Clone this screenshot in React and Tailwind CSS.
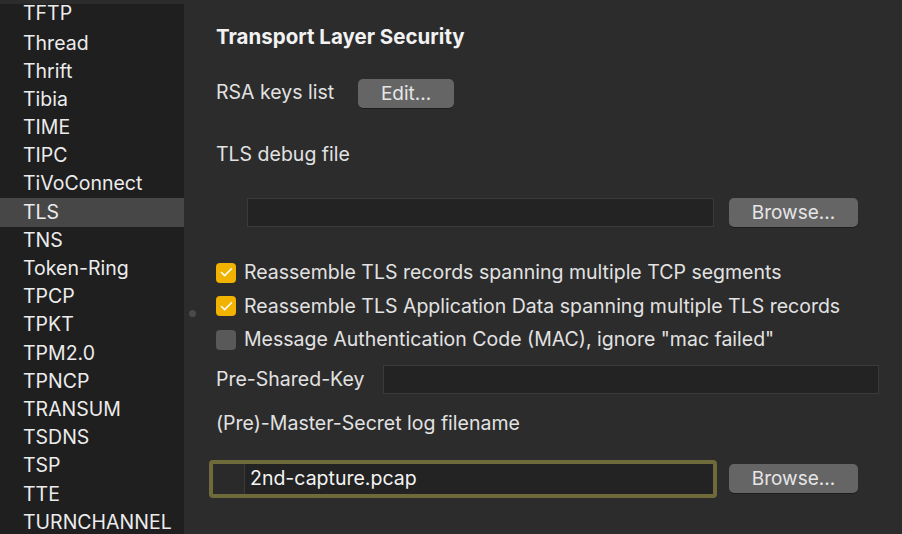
import { Check } from 'lucide-react';

const PROTOCOLS = [
  'TFTP', 'Thread', 'Thrift', 'Tibia', 'TIME', 'TIPC', 'TiVoConnect', 'TLS', 'TNS', 'Token-Ring',
  'TPCP', 'TPKT', 'TPM2.0', 'TPNCP', 'TRANSUM', 'TSDNS', 'TSP', 'TTE', 'TURNCHANNEL',
];

const MacButton = ({ children, className = '' }) => (
  <button className={`h-[29px] rounded-[5px] bg-[#656565] text-[#e6e6e6] text-[19px] leading-none flex items-center justify-center shadow-[0_1px_0_rgba(0,0,0,0.35)] ${className}`}>
    {children}
  </button>
);

const CheckRow = ({ checked, label }) => (
  <div className="flex items-center h-[33.5px]">
    <span className={`w-[20px] h-[20px] rounded-[4px] flex items-center justify-center ${checked ? 'bg-[#f2b300]' : 'bg-[#595959]'}`}>
      {checked && <Check size={15} strokeWidth={2.5} className="text-white" />}
    </span>
    <span className="ml-[8px]">{label}</span>
  </div>
);

export default function App() {
  return (
    <div className="w-[902px] h-[534px] overflow-hidden bg-[#2c2c2c] text-[#e2e2e2] text-[19.5px] flex" style={{ fontFamily: 'Inter, "Liberation Sans", sans-serif' }}>
      {/* protocol list */}
      <div className="w-[184px] h-full pt-[4px] shrink-0 flex flex-col">
        <div className="flex-1 bg-[#1f1f1f] overflow-hidden">
          {PROTOCOLS.map((p, i) => (
            <div
              key={p}
              className={`${i === 0 ? 'h-[25.2px] items-start' : 'h-[28.2px] items-center'} flex pl-[23px] leading-none text-[#ececec] ${p === 'TLS' ? 'bg-[#474747]' : ''}`}
            >
              {p}
            </div>
          ))}
        </div>
      </div>

      {/* splitter */}
      <div className="w-[16px] shrink-0 flex items-start justify-center">
        <span className="mt-[310px] w-[7px] h-[7px] rounded-full bg-[#4a4a4a]" />
      </div>

      {/* preferences */}
      <div className="flex-1 pl-[16px] pr-[23px] flex flex-col">
        <div className="h-[74px] flex items-center font-bold text-[20.5px] text-[#f2f2f2]">Transport Layer Security</div>
        <div className="h-[38px] flex items-center">
          <span>RSA keys list</span>
          <MacButton className="ml-[24px] w-[96px]">Edit...</MacButton>
        </div>
        <div className="h-[86px] flex items-center">TLS debug file</div>
        <div className="flex items-center pl-[31px]">
          <div className="w-[467px] h-[29px] bg-[#232323] border border-[#3a3a3a]" />
          <MacButton className="ml-[15px] w-[129px]">Browse...</MacButton>
        </div>
        <div className="mt-[29px]">
          <CheckRow checked label="Reassemble TLS records spanning multiple TCP segments" />
          <CheckRow checked label="Reassemble TLS Application Data spanning multiple TLS records" />
          <CheckRow checked={false} label={'Message Authentication Code (MAC), ignore "mac failed"'} />
        </div>
        <div className="flex items-center mt-[8px] h-[30px]">
          <span>Pre-Shared-Key</span>
          <div className="ml-[19px] flex-1 h-[29px] bg-[#232323] border border-[#3a3a3a]" />
        </div>
        <div className="h-[58px] flex items-center">(Pre)-Master-Secret log filename</div>
        <div className="flex items-center -ml-[7px] mt-[7px]">
          <div className="w-[508px] h-[38px] rounded-[4px] border-[4px] border-[#6f6a3a] flex">
            <div className="w-[32px] bg-[#2a2a2a] border-r border-[#3a3a3a]" />
            <div className="flex-1 bg-[#232323] flex items-center pl-[5px] text-[#f4f4f4]">2nd-capture.pcap</div>
          </div>
          <MacButton className="ml-[12px] w-[129px]">Browse...</MacButton>
        </div>
      </div>
    </div>
  );
}
